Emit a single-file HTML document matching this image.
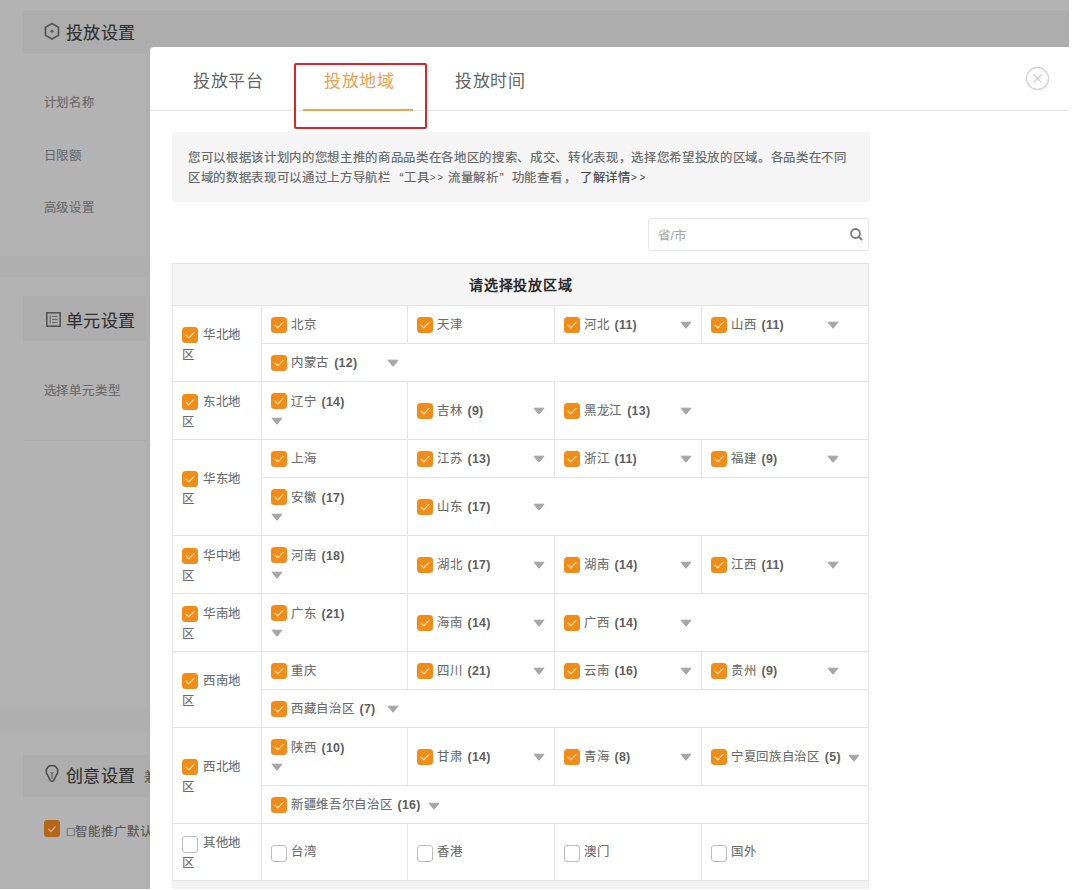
<!DOCTYPE html><html lang="zh-CN"><head><meta charset="utf-8"><style>
*{margin:0;padding:0;box-sizing:border-box}
html,body{width:1080px;height:890px;overflow:hidden;background:#fff;font-family:"Liberation Sans",sans-serif}
.a{position:absolute}
.t{position:absolute;white-space:nowrap;line-height:20px;-webkit-text-stroke:0.15px currentColor}
.bg{left:0;top:0;width:1069px;height:889px;background:#b3b3b3}
.card{background:#adadad}
.hd{font-size:17px;letter-spacing:0.35px;color:#303030}
.lbl{font-size:12.4px;letter-spacing:0.85px;color:#6a6a6a}
.modal{left:150px;top:47px;width:919px;height:842px;background:#fff;border-top-left-radius:4px}
.tab{font-size:17px;letter-spacing:0.6px;color:#666;line-height:24px;-webkit-text-stroke:0}
.info{left:172px;top:132px;width:698px;height:70px;background:#f5f5f5;border-radius:3px}
.itxt{font-size:12.4px;letter-spacing:0.67px;color:#666;line-height:20px}
.hl{position:absolute;height:1px;background:#e4e4e4}
.vl{position:absolute;width:1px;background:#e4e4e4}
.cb{position:absolute;width:16px;height:16px;border-radius:3.5px;background:#f28c18}
.cb svg{position:absolute;left:0;top:0}
.ucb{position:absolute;width:16px;height:17px;border-radius:3px;border:1.6px solid #bdbdbd;background:#fff}
.nm{position:absolute;white-space:nowrap;-webkit-text-stroke:0.1px currentColor;font-size:12.4px;letter-spacing:0.67px;line-height:20px;color:#6a6a6a}
.nm b{font-family:"Liberation Sans",sans-serif;font-weight:bold;color:#606060;letter-spacing:0.3px;margin-left:1px;-webkit-text-stroke:0}
.ia{display:inline-block;vertical-align:middle;width:12px;height:8px;margin-left:7px;margin-top:1px}
.ar{position:absolute;width:12px;height:8px;line-height:0}
.ar svg,.ia svg{display:block}
</style></head><body><div class="a bg"></div>
<div class="a card" style="left:23px;top:10px;width:1046px;height:44px"></div>
<div class="a" style="left:0;top:256px;width:150px;height:21px;background:#b0b0b0"></div>
<div class="a" style="left:0;top:708px;width:150px;height:24px;background:#b0b0b0"></div>
<div class="a card" style="left:23px;top:296px;width:127px;height:45px"></div>
<div class="a" style="left:24px;top:440px;width:126px;height:1px;background:#a9a9a9"></div>
<div class="a" style="left:146px;top:54px;width:4px;height:835px;background:#afafaf"></div>
<div class="a card" style="left:23px;top:755px;width:127px;height:42px"></div>
<svg class="a" style="left:44px;top:22px" width="16" height="19" viewBox="0 0 16 19"><path d="M8 1.5 L14.5 5.2 L14.5 13.3 L8 17 L1.5 13.3 L1.5 5.2 Z" fill="none" stroke="#585858" stroke-width="1.8" stroke-linejoin="round"/><circle cx="8" cy="9.3" r="1.5" fill="#585858"/></svg>
<div class="t hd" style="left:66px;top:24px">投放设置</div>
<div class="lbl t" style="left:43.5px;top:93px;">计划名称</div>
<div class="lbl t" style="left:43.5px;top:145.5px;">日限额</div>
<div class="lbl t" style="left:43.5px;top:198.3px;">高级设置</div>
<svg class="a" style="left:46px;top:312px" width="15" height="15" viewBox="0 0 15 15"><rect x="0.8" y="0.8" width="13.4" height="13.4" fill="none" stroke="#505050" stroke-width="1.5"/><path d="M4.2 3.5V11.5M6 4.5H11.5M6 7.5H11.5M6 10.5H11.5" stroke="#6a6a6a" stroke-width="1"/></svg>
<div class="t hd" style="left:66px;top:311.5px">单元设置</div>
<div class="lbl t" style="left:43.5px;top:380.5px;">选择单元类型</div>
<svg class="a" style="left:45px;top:765px" width="15" height="19" viewBox="0 0 15 19"><path d="M2.6 10 A5.8 5.8 0 1 1 11.4 10 L9 14.8 Q7 18.2 5 14.8 Z" fill="none" stroke="#4a4a4a" stroke-width="1.6" stroke-linejoin="round"/><path d="M7 8V14M5.6 7 L7 8.6 L8.4 7" fill="none" stroke="#555" stroke-width="1"/></svg>
<div class="t hd" style="left:66px;top:767px">创意设置</div>
<div class="t hd" style="left:144px;top:767px;font-size:13px;color:#555">兼</div>
<div class="a" style="left:44px;top:820px;width:16px;height:17px;border-radius:3px;background:#b5651c"><svg width="16" height="17" viewBox="0 0 16 16"><path d="M4.2 8.6 L6.9 11 L11.6 6" fill="none" stroke="#e0b070" stroke-width="1.3"/></svg></div>
<div class="lbl t" style="left:67px;top:821.5px;color:#555">□智能推广默认</div>
<div class="a modal"></div>
<div class="a" style="left:150px;top:110px;width:919px;height:1px;background:#e8e8e8"></div>
<div class="t tab" style="left:193px;top:70px">投放平台</div>
<div class="t tab" style="left:324px;top:70px;color:#f0a04e">投放地域</div>
<div class="t tab" style="left:455px;top:70px">投放时间</div>
<div class="a" style="left:302.5px;top:108.5px;width:110.5px;height:2.5px;background:#e9a458"></div>
<div class="a" style="left:294px;top:62.5px;width:133px;height:66.5px;border:2.5px solid #d8262c;border-radius:2px"></div>
<svg class="a" style="left:1024px;top:65px" width="27" height="27" viewBox="0 0 27 27"><circle cx="13.5" cy="13.5" r="11" fill="none" stroke="#d4d4d4" stroke-width="1.3"/><path d="M9.5 9.5 L17.5 17.5 M17.5 9.5 L9.5 17.5" stroke="#d0d0d0" stroke-width="1.3"/></svg>
<div class="a info"></div>
<div class="t itxt" style="left:188px;top:147.7px">您可以根据该计划内的您想主推的商品品类在各地区的搜索、成交、转化表现，选择您希望投放的区域。各品类在不同</div>
<div class="t itxt" style="left:188px;top:167.7px;">区域的数据表现可以通过上方导航栏</div>
<div class="t itxt" style="left:399.5px;top:167.7px;">“</div>
<div class="t itxt" style="left:404.3px;top:167.7px;">工具</div>
<div class="t itxt" style="left:448px;top:167.7px;">流量解析</div>
<div class="t itxt" style="left:499.5px;top:167.7px;">”</div>
<div class="t itxt" style="left:511.5px;top:167.7px;">功能查看</div>
<div class="t itxt" style="left:563.5px;top:167.7px;">，</div>
<div class="t itxt" style="left:580px;top:167.7px;color:#444">了解详情</div>
<div class="t itxt" style="left:429.8px;top:167.7px;font-size:10px;letter-spacing:0;-webkit-text-stroke:0;">&gt;</div>
<div class="t itxt" style="left:437.3px;top:167.7px;font-size:10px;letter-spacing:0;-webkit-text-stroke:0;">&gt;</div>
<div class="t itxt" style="left:631px;top:167.7px;font-size:10px;letter-spacing:0;-webkit-text-stroke:0;color:#444">&gt;</div>
<div class="t itxt" style="left:639.5px;top:167.7px;font-size:10px;letter-spacing:0;-webkit-text-stroke:0;color:#444">&gt;</div>
<div class="a" style="left:648px;top:218px;width:221px;height:33px;border:1px solid #e6e6e6;border-radius:3px;background:#fff"></div>
<div class="t" style="left:658px;top:226px;font-size:12.4px;letter-spacing:0.5px;color:#aaa">省/市</div>
<svg class="a" style="left:849px;top:228px" width="14" height="14" viewBox="0 0 14 14"><circle cx="6.5" cy="5.5" r="4.5" fill="none" stroke="#7a7a7a" stroke-width="1.8"/><path d="M9.8 8.8 L12.6 11.6" stroke="#7a7a7a" stroke-width="1.9" stroke-linecap="round"/></svg>
<div class="a" style="left:172px;top:263px;width:697px;height:42px;background:#f5f5f5"></div>
<div class="a" style="left:172px;top:880px;width:697px;height:9px;background:#f2f2f2"></div>
<div class="t" style="left:172px;top:275px;width:697px;text-align:center;font-size:14px;letter-spacing:0.9px;text-indent:0.9px;font-weight:bold;color:#2a2a2a;-webkit-text-stroke:0">请选择投放区域</div>
<div class="vl" style="left:172px;top:263px;height:618px"></div>
<div class="vl" style="left:868px;top:263px;height:618px"></div>
<div class="hl" style="left:172px;top:263px;width:697px"></div>
<div class="hl" style="left:172px;top:880px;width:697px"></div>
<div class="hl" style="left:172px;top:305px;width:697px"></div>
<div class="hl" style="left:172px;top:381px;width:697px"></div>
<div class="hl" style="left:172px;top:439px;width:697px"></div>
<div class="hl" style="left:172px;top:535px;width:697px"></div>
<div class="hl" style="left:172px;top:593px;width:697px"></div>
<div class="hl" style="left:172px;top:651px;width:697px"></div>
<div class="hl" style="left:172px;top:727px;width:697px"></div>
<div class="hl" style="left:172px;top:823px;width:697px"></div>
<div class="hl" style="left:261px;top:343px;width:608px"></div>
<div class="hl" style="left:261px;top:477px;width:608px"></div>
<div class="hl" style="left:261px;top:689px;width:608px"></div>
<div class="hl" style="left:261px;top:785px;width:608px"></div>
<div class="vl" style="left:261px;top:305px;height:576px"></div>
<div class="cb" style="left:182px;top:327.0px"><svg width="16" height="16" viewBox="0 0 16 16"><path d="M4.2 8.3 L6.9 10.9 L11.8 5.6" fill="none" stroke="#ffe2ad" stroke-width="1.3" stroke-linecap="round" stroke-linejoin="round"/></svg></div>
<div class="nm" style="left:203px;top:324.5px;">华北地</div>
<div class="nm" style="left:182px;top:344.5px;">区</div>
<div class="cb" style="left:182px;top:394.0px"><svg width="16" height="16" viewBox="0 0 16 16"><path d="M4.2 8.3 L6.9 10.9 L11.8 5.6" fill="none" stroke="#ffe2ad" stroke-width="1.3" stroke-linecap="round" stroke-linejoin="round"/></svg></div>
<div class="nm" style="left:203px;top:391.5px;">东北地</div>
<div class="nm" style="left:182px;top:411.5px;">区</div>
<div class="cb" style="left:182px;top:471.0px"><svg width="16" height="16" viewBox="0 0 16 16"><path d="M4.2 8.3 L6.9 10.9 L11.8 5.6" fill="none" stroke="#ffe2ad" stroke-width="1.3" stroke-linecap="round" stroke-linejoin="round"/></svg></div>
<div class="nm" style="left:203px;top:468.5px;">华东地</div>
<div class="nm" style="left:182px;top:488.5px;">区</div>
<div class="cb" style="left:182px;top:548.0px"><svg width="16" height="16" viewBox="0 0 16 16"><path d="M4.2 8.3 L6.9 10.9 L11.8 5.6" fill="none" stroke="#ffe2ad" stroke-width="1.3" stroke-linecap="round" stroke-linejoin="round"/></svg></div>
<div class="nm" style="left:203px;top:545.5px;">华中地</div>
<div class="nm" style="left:182px;top:565.5px;">区</div>
<div class="cb" style="left:182px;top:606.0px"><svg width="16" height="16" viewBox="0 0 16 16"><path d="M4.2 8.3 L6.9 10.9 L11.8 5.6" fill="none" stroke="#ffe2ad" stroke-width="1.3" stroke-linecap="round" stroke-linejoin="round"/></svg></div>
<div class="nm" style="left:203px;top:603.5px;">华南地</div>
<div class="nm" style="left:182px;top:623.5px;">区</div>
<div class="cb" style="left:182px;top:673.0px"><svg width="16" height="16" viewBox="0 0 16 16"><path d="M4.2 8.3 L6.9 10.9 L11.8 5.6" fill="none" stroke="#ffe2ad" stroke-width="1.3" stroke-linecap="round" stroke-linejoin="round"/></svg></div>
<div class="nm" style="left:203px;top:670.5px;">西南地</div>
<div class="nm" style="left:182px;top:690.5px;">区</div>
<div class="cb" style="left:182px;top:759.0px"><svg width="16" height="16" viewBox="0 0 16 16"><path d="M4.2 8.3 L6.9 10.9 L11.8 5.6" fill="none" stroke="#ffe2ad" stroke-width="1.3" stroke-linecap="round" stroke-linejoin="round"/></svg></div>
<div class="nm" style="left:203px;top:756.5px;">西北地</div>
<div class="nm" style="left:182px;top:776.5px;">区</div>
<div class="ucb" style="left:182px;top:835.5px"></div>
<div class="nm" style="left:203px;top:833.0px;">其他地</div>
<div class="nm" style="left:182px;top:853.0px;">区</div>
<div class="cb" style="left:271px;top:317.0px"><svg width="16" height="16" viewBox="0 0 16 16"><path d="M4.2 8.3 L6.9 10.9 L11.8 5.6" fill="none" stroke="#ffe2ad" stroke-width="1.3" stroke-linecap="round" stroke-linejoin="round"/></svg></div>
<div class="nm" style="left:291px;top:314.5px;">北京</div>
<div class="vl" style="left:407px;top:305px;height:39px"></div>
<div class="cb" style="left:417px;top:317.0px"><svg width="16" height="16" viewBox="0 0 16 16"><path d="M4.2 8.3 L6.9 10.9 L11.8 5.6" fill="none" stroke="#ffe2ad" stroke-width="1.3" stroke-linecap="round" stroke-linejoin="round"/></svg></div>
<div class="nm" style="left:437px;top:314.5px;">天津</div>
<div class="vl" style="left:554px;top:305px;height:39px"></div>
<div class="cb" style="left:564px;top:317.0px"><svg width="16" height="16" viewBox="0 0 16 16"><path d="M4.2 8.3 L6.9 10.9 L11.8 5.6" fill="none" stroke="#ffe2ad" stroke-width="1.3" stroke-linecap="round" stroke-linejoin="round"/></svg></div>
<div class="nm" style="left:584px;top:314.5px;">河北 <b>(11)</b></div>
<div class="ar" style="left:679.7px;top:320.5px"><svg width="12" height="8" viewBox="0 0 12 8"><path d="M1 1.2 L11 1.2 L6 7.2 Z" fill="#a6a6a6" stroke="#a6a6a6" stroke-width="1" stroke-linejoin="round"/></svg></div>
<div class="vl" style="left:701px;top:305px;height:39px"></div>
<div class="cb" style="left:711px;top:317.0px"><svg width="16" height="16" viewBox="0 0 16 16"><path d="M4.2 8.3 L6.9 10.9 L11.8 5.6" fill="none" stroke="#ffe2ad" stroke-width="1.3" stroke-linecap="round" stroke-linejoin="round"/></svg></div>
<div class="nm" style="left:731px;top:314.5px;">山西 <b>(11)</b></div>
<div class="ar" style="left:826.7px;top:320.5px"><svg width="12" height="8" viewBox="0 0 12 8"><path d="M1 1.2 L11 1.2 L6 7.2 Z" fill="#a6a6a6" stroke="#a6a6a6" stroke-width="1" stroke-linejoin="round"/></svg></div>
<div class="cb" style="left:271px;top:355.0px"><svg width="16" height="16" viewBox="0 0 16 16"><path d="M4.2 8.3 L6.9 10.9 L11.8 5.6" fill="none" stroke="#ffe2ad" stroke-width="1.3" stroke-linecap="round" stroke-linejoin="round"/></svg></div>
<div class="nm" style="left:291px;top:352.5px;">内蒙古 <b>(12)</b></div>
<div class="ar" style="left:386.7px;top:358.5px"><svg width="12" height="8" viewBox="0 0 12 8"><path d="M1 1.2 L11 1.2 L6 7.2 Z" fill="#a6a6a6" stroke="#a6a6a6" stroke-width="1" stroke-linejoin="round"/></svg></div>
<div class="cb" style="left:271px;top:393px"><svg width="16" height="16" viewBox="0 0 16 16"><path d="M4.2 8.3 L6.9 10.9 L11.8 5.6" fill="none" stroke="#ffe2ad" stroke-width="1.3" stroke-linecap="round" stroke-linejoin="round"/></svg></div>
<div class="nm" style="left:291px;top:392px;">辽宁 <b>(14)</b></div>
<div class="ar" style="left:270.7px;top:417px"><svg width="12" height="8" viewBox="0 0 12 8"><path d="M1 1.2 L11 1.2 L6 7.2 Z" fill="#a6a6a6" stroke="#a6a6a6" stroke-width="1" stroke-linejoin="round"/></svg></div>
<div class="vl" style="left:407px;top:381px;height:59px"></div>
<div class="cb" style="left:417px;top:403.0px"><svg width="16" height="16" viewBox="0 0 16 16"><path d="M4.2 8.3 L6.9 10.9 L11.8 5.6" fill="none" stroke="#ffe2ad" stroke-width="1.3" stroke-linecap="round" stroke-linejoin="round"/></svg></div>
<div class="nm" style="left:437px;top:400.5px;">吉林 <b>(9)</b></div>
<div class="ar" style="left:532.7px;top:406.5px"><svg width="12" height="8" viewBox="0 0 12 8"><path d="M1 1.2 L11 1.2 L6 7.2 Z" fill="#a6a6a6" stroke="#a6a6a6" stroke-width="1" stroke-linejoin="round"/></svg></div>
<div class="vl" style="left:554px;top:381px;height:59px"></div>
<div class="cb" style="left:564px;top:403.0px"><svg width="16" height="16" viewBox="0 0 16 16"><path d="M4.2 8.3 L6.9 10.9 L11.8 5.6" fill="none" stroke="#ffe2ad" stroke-width="1.3" stroke-linecap="round" stroke-linejoin="round"/></svg></div>
<div class="nm" style="left:584px;top:400.5px;">黑龙江 <b>(13)</b></div>
<div class="ar" style="left:679.7px;top:406.5px"><svg width="12" height="8" viewBox="0 0 12 8"><path d="M1 1.2 L11 1.2 L6 7.2 Z" fill="#a6a6a6" stroke="#a6a6a6" stroke-width="1" stroke-linejoin="round"/></svg></div>
<div class="cb" style="left:271px;top:451.0px"><svg width="16" height="16" viewBox="0 0 16 16"><path d="M4.2 8.3 L6.9 10.9 L11.8 5.6" fill="none" stroke="#ffe2ad" stroke-width="1.3" stroke-linecap="round" stroke-linejoin="round"/></svg></div>
<div class="nm" style="left:291px;top:448.5px;">上海</div>
<div class="vl" style="left:407px;top:439px;height:39px"></div>
<div class="cb" style="left:417px;top:451.0px"><svg width="16" height="16" viewBox="0 0 16 16"><path d="M4.2 8.3 L6.9 10.9 L11.8 5.6" fill="none" stroke="#ffe2ad" stroke-width="1.3" stroke-linecap="round" stroke-linejoin="round"/></svg></div>
<div class="nm" style="left:437px;top:448.5px;">江苏 <b>(13)</b></div>
<div class="ar" style="left:532.7px;top:454.5px"><svg width="12" height="8" viewBox="0 0 12 8"><path d="M1 1.2 L11 1.2 L6 7.2 Z" fill="#a6a6a6" stroke="#a6a6a6" stroke-width="1" stroke-linejoin="round"/></svg></div>
<div class="vl" style="left:554px;top:439px;height:39px"></div>
<div class="cb" style="left:564px;top:451.0px"><svg width="16" height="16" viewBox="0 0 16 16"><path d="M4.2 8.3 L6.9 10.9 L11.8 5.6" fill="none" stroke="#ffe2ad" stroke-width="1.3" stroke-linecap="round" stroke-linejoin="round"/></svg></div>
<div class="nm" style="left:584px;top:448.5px;">浙江 <b>(11)</b></div>
<div class="ar" style="left:679.7px;top:454.5px"><svg width="12" height="8" viewBox="0 0 12 8"><path d="M1 1.2 L11 1.2 L6 7.2 Z" fill="#a6a6a6" stroke="#a6a6a6" stroke-width="1" stroke-linejoin="round"/></svg></div>
<div class="vl" style="left:701px;top:439px;height:39px"></div>
<div class="cb" style="left:711px;top:451.0px"><svg width="16" height="16" viewBox="0 0 16 16"><path d="M4.2 8.3 L6.9 10.9 L11.8 5.6" fill="none" stroke="#ffe2ad" stroke-width="1.3" stroke-linecap="round" stroke-linejoin="round"/></svg></div>
<div class="nm" style="left:731px;top:448.5px;">福建 <b>(9)</b></div>
<div class="ar" style="left:826.7px;top:454.5px"><svg width="12" height="8" viewBox="0 0 12 8"><path d="M1 1.2 L11 1.2 L6 7.2 Z" fill="#a6a6a6" stroke="#a6a6a6" stroke-width="1" stroke-linejoin="round"/></svg></div>
<div class="cb" style="left:271px;top:489px"><svg width="16" height="16" viewBox="0 0 16 16"><path d="M4.2 8.3 L6.9 10.9 L11.8 5.6" fill="none" stroke="#ffe2ad" stroke-width="1.3" stroke-linecap="round" stroke-linejoin="round"/></svg></div>
<div class="nm" style="left:291px;top:488px;">安徽 <b>(17)</b></div>
<div class="ar" style="left:270.7px;top:513px"><svg width="12" height="8" viewBox="0 0 12 8"><path d="M1 1.2 L11 1.2 L6 7.2 Z" fill="#a6a6a6" stroke="#a6a6a6" stroke-width="1" stroke-linejoin="round"/></svg></div>
<div class="vl" style="left:407px;top:477px;height:59px"></div>
<div class="cb" style="left:417px;top:499.0px"><svg width="16" height="16" viewBox="0 0 16 16"><path d="M4.2 8.3 L6.9 10.9 L11.8 5.6" fill="none" stroke="#ffe2ad" stroke-width="1.3" stroke-linecap="round" stroke-linejoin="round"/></svg></div>
<div class="nm" style="left:437px;top:496.5px;">山东 <b>(17)</b></div>
<div class="ar" style="left:532.7px;top:502.5px"><svg width="12" height="8" viewBox="0 0 12 8"><path d="M1 1.2 L11 1.2 L6 7.2 Z" fill="#a6a6a6" stroke="#a6a6a6" stroke-width="1" stroke-linejoin="round"/></svg></div>
<div class="cb" style="left:271px;top:547px"><svg width="16" height="16" viewBox="0 0 16 16"><path d="M4.2 8.3 L6.9 10.9 L11.8 5.6" fill="none" stroke="#ffe2ad" stroke-width="1.3" stroke-linecap="round" stroke-linejoin="round"/></svg></div>
<div class="nm" style="left:291px;top:546px;">河南 <b>(18)</b></div>
<div class="ar" style="left:270.7px;top:571px"><svg width="12" height="8" viewBox="0 0 12 8"><path d="M1 1.2 L11 1.2 L6 7.2 Z" fill="#a6a6a6" stroke="#a6a6a6" stroke-width="1" stroke-linejoin="round"/></svg></div>
<div class="vl" style="left:407px;top:535px;height:59px"></div>
<div class="cb" style="left:417px;top:557.0px"><svg width="16" height="16" viewBox="0 0 16 16"><path d="M4.2 8.3 L6.9 10.9 L11.8 5.6" fill="none" stroke="#ffe2ad" stroke-width="1.3" stroke-linecap="round" stroke-linejoin="round"/></svg></div>
<div class="nm" style="left:437px;top:554.5px;">湖北 <b>(17)</b></div>
<div class="ar" style="left:532.7px;top:560.5px"><svg width="12" height="8" viewBox="0 0 12 8"><path d="M1 1.2 L11 1.2 L6 7.2 Z" fill="#a6a6a6" stroke="#a6a6a6" stroke-width="1" stroke-linejoin="round"/></svg></div>
<div class="vl" style="left:554px;top:535px;height:59px"></div>
<div class="cb" style="left:564px;top:557.0px"><svg width="16" height="16" viewBox="0 0 16 16"><path d="M4.2 8.3 L6.9 10.9 L11.8 5.6" fill="none" stroke="#ffe2ad" stroke-width="1.3" stroke-linecap="round" stroke-linejoin="round"/></svg></div>
<div class="nm" style="left:584px;top:554.5px;">湖南 <b>(14)</b></div>
<div class="ar" style="left:679.7px;top:560.5px"><svg width="12" height="8" viewBox="0 0 12 8"><path d="M1 1.2 L11 1.2 L6 7.2 Z" fill="#a6a6a6" stroke="#a6a6a6" stroke-width="1" stroke-linejoin="round"/></svg></div>
<div class="vl" style="left:701px;top:535px;height:59px"></div>
<div class="cb" style="left:711px;top:557.0px"><svg width="16" height="16" viewBox="0 0 16 16"><path d="M4.2 8.3 L6.9 10.9 L11.8 5.6" fill="none" stroke="#ffe2ad" stroke-width="1.3" stroke-linecap="round" stroke-linejoin="round"/></svg></div>
<div class="nm" style="left:731px;top:554.5px;">江西 <b>(11)</b></div>
<div class="ar" style="left:826.7px;top:560.5px"><svg width="12" height="8" viewBox="0 0 12 8"><path d="M1 1.2 L11 1.2 L6 7.2 Z" fill="#a6a6a6" stroke="#a6a6a6" stroke-width="1" stroke-linejoin="round"/></svg></div>
<div class="cb" style="left:271px;top:605px"><svg width="16" height="16" viewBox="0 0 16 16"><path d="M4.2 8.3 L6.9 10.9 L11.8 5.6" fill="none" stroke="#ffe2ad" stroke-width="1.3" stroke-linecap="round" stroke-linejoin="round"/></svg></div>
<div class="nm" style="left:291px;top:604px;">广东 <b>(21)</b></div>
<div class="ar" style="left:270.7px;top:629px"><svg width="12" height="8" viewBox="0 0 12 8"><path d="M1 1.2 L11 1.2 L6 7.2 Z" fill="#a6a6a6" stroke="#a6a6a6" stroke-width="1" stroke-linejoin="round"/></svg></div>
<div class="vl" style="left:407px;top:593px;height:59px"></div>
<div class="cb" style="left:417px;top:615.0px"><svg width="16" height="16" viewBox="0 0 16 16"><path d="M4.2 8.3 L6.9 10.9 L11.8 5.6" fill="none" stroke="#ffe2ad" stroke-width="1.3" stroke-linecap="round" stroke-linejoin="round"/></svg></div>
<div class="nm" style="left:437px;top:612.5px;">海南 <b>(14)</b></div>
<div class="ar" style="left:532.7px;top:618.5px"><svg width="12" height="8" viewBox="0 0 12 8"><path d="M1 1.2 L11 1.2 L6 7.2 Z" fill="#a6a6a6" stroke="#a6a6a6" stroke-width="1" stroke-linejoin="round"/></svg></div>
<div class="vl" style="left:554px;top:593px;height:59px"></div>
<div class="cb" style="left:564px;top:615.0px"><svg width="16" height="16" viewBox="0 0 16 16"><path d="M4.2 8.3 L6.9 10.9 L11.8 5.6" fill="none" stroke="#ffe2ad" stroke-width="1.3" stroke-linecap="round" stroke-linejoin="round"/></svg></div>
<div class="nm" style="left:584px;top:612.5px;">广西 <b>(14)</b></div>
<div class="ar" style="left:679.7px;top:618.5px"><svg width="12" height="8" viewBox="0 0 12 8"><path d="M1 1.2 L11 1.2 L6 7.2 Z" fill="#a6a6a6" stroke="#a6a6a6" stroke-width="1" stroke-linejoin="round"/></svg></div>
<div class="cb" style="left:271px;top:663.0px"><svg width="16" height="16" viewBox="0 0 16 16"><path d="M4.2 8.3 L6.9 10.9 L11.8 5.6" fill="none" stroke="#ffe2ad" stroke-width="1.3" stroke-linecap="round" stroke-linejoin="round"/></svg></div>
<div class="nm" style="left:291px;top:660.5px;">重庆</div>
<div class="vl" style="left:407px;top:651px;height:39px"></div>
<div class="cb" style="left:417px;top:663.0px"><svg width="16" height="16" viewBox="0 0 16 16"><path d="M4.2 8.3 L6.9 10.9 L11.8 5.6" fill="none" stroke="#ffe2ad" stroke-width="1.3" stroke-linecap="round" stroke-linejoin="round"/></svg></div>
<div class="nm" style="left:437px;top:660.5px;">四川 <b>(21)</b></div>
<div class="ar" style="left:532.7px;top:666.5px"><svg width="12" height="8" viewBox="0 0 12 8"><path d="M1 1.2 L11 1.2 L6 7.2 Z" fill="#a6a6a6" stroke="#a6a6a6" stroke-width="1" stroke-linejoin="round"/></svg></div>
<div class="vl" style="left:554px;top:651px;height:39px"></div>
<div class="cb" style="left:564px;top:663.0px"><svg width="16" height="16" viewBox="0 0 16 16"><path d="M4.2 8.3 L6.9 10.9 L11.8 5.6" fill="none" stroke="#ffe2ad" stroke-width="1.3" stroke-linecap="round" stroke-linejoin="round"/></svg></div>
<div class="nm" style="left:584px;top:660.5px;">云南 <b>(16)</b></div>
<div class="ar" style="left:679.7px;top:666.5px"><svg width="12" height="8" viewBox="0 0 12 8"><path d="M1 1.2 L11 1.2 L6 7.2 Z" fill="#a6a6a6" stroke="#a6a6a6" stroke-width="1" stroke-linejoin="round"/></svg></div>
<div class="vl" style="left:701px;top:651px;height:39px"></div>
<div class="cb" style="left:711px;top:663.0px"><svg width="16" height="16" viewBox="0 0 16 16"><path d="M4.2 8.3 L6.9 10.9 L11.8 5.6" fill="none" stroke="#ffe2ad" stroke-width="1.3" stroke-linecap="round" stroke-linejoin="round"/></svg></div>
<div class="nm" style="left:731px;top:660.5px;">贵州 <b>(9)</b></div>
<div class="ar" style="left:826.7px;top:666.5px"><svg width="12" height="8" viewBox="0 0 12 8"><path d="M1 1.2 L11 1.2 L6 7.2 Z" fill="#a6a6a6" stroke="#a6a6a6" stroke-width="1" stroke-linejoin="round"/></svg></div>
<div class="cb" style="left:271px;top:701.0px"><svg width="16" height="16" viewBox="0 0 16 16"><path d="M4.2 8.3 L6.9 10.9 L11.8 5.6" fill="none" stroke="#ffe2ad" stroke-width="1.3" stroke-linecap="round" stroke-linejoin="round"/></svg></div>
<div class="nm" style="left:291px;top:698.5px;">西藏自治区 <b>(7)</b></div>
<div class="ar" style="left:386.7px;top:704.5px"><svg width="12" height="8" viewBox="0 0 12 8"><path d="M1 1.2 L11 1.2 L6 7.2 Z" fill="#a6a6a6" stroke="#a6a6a6" stroke-width="1" stroke-linejoin="round"/></svg></div>
<div class="cb" style="left:271px;top:739px"><svg width="16" height="16" viewBox="0 0 16 16"><path d="M4.2 8.3 L6.9 10.9 L11.8 5.6" fill="none" stroke="#ffe2ad" stroke-width="1.3" stroke-linecap="round" stroke-linejoin="round"/></svg></div>
<div class="nm" style="left:291px;top:738px;">陕西 <b>(10)</b></div>
<div class="ar" style="left:270.7px;top:763px"><svg width="12" height="8" viewBox="0 0 12 8"><path d="M1 1.2 L11 1.2 L6 7.2 Z" fill="#a6a6a6" stroke="#a6a6a6" stroke-width="1" stroke-linejoin="round"/></svg></div>
<div class="vl" style="left:407px;top:727px;height:59px"></div>
<div class="cb" style="left:417px;top:749.0px"><svg width="16" height="16" viewBox="0 0 16 16"><path d="M4.2 8.3 L6.9 10.9 L11.8 5.6" fill="none" stroke="#ffe2ad" stroke-width="1.3" stroke-linecap="round" stroke-linejoin="round"/></svg></div>
<div class="nm" style="left:437px;top:746.5px;">甘肃 <b>(14)</b></div>
<div class="ar" style="left:532.7px;top:752.5px"><svg width="12" height="8" viewBox="0 0 12 8"><path d="M1 1.2 L11 1.2 L6 7.2 Z" fill="#a6a6a6" stroke="#a6a6a6" stroke-width="1" stroke-linejoin="round"/></svg></div>
<div class="vl" style="left:554px;top:727px;height:59px"></div>
<div class="cb" style="left:564px;top:749.0px"><svg width="16" height="16" viewBox="0 0 16 16"><path d="M4.2 8.3 L6.9 10.9 L11.8 5.6" fill="none" stroke="#ffe2ad" stroke-width="1.3" stroke-linecap="round" stroke-linejoin="round"/></svg></div>
<div class="nm" style="left:584px;top:746.5px;">青海 <b>(8)</b></div>
<div class="ar" style="left:679.7px;top:752.5px"><svg width="12" height="8" viewBox="0 0 12 8"><path d="M1 1.2 L11 1.2 L6 7.2 Z" fill="#a6a6a6" stroke="#a6a6a6" stroke-width="1" stroke-linejoin="round"/></svg></div>
<div class="vl" style="left:701px;top:727px;height:59px"></div>
<div class="cb" style="left:711px;top:749.0px"><svg width="16" height="16" viewBox="0 0 16 16"><path d="M4.2 8.3 L6.9 10.9 L11.8 5.6" fill="none" stroke="#ffe2ad" stroke-width="1.3" stroke-linecap="round" stroke-linejoin="round"/></svg></div>
<div class="nm" style="left:731px;top:746.5px;">宁夏回族自治区 <b>(5)</b><span class="ia"><svg width="12" height="8" viewBox="0 0 12 8"><path d="M1 1.2 L11 1.2 L6 7.2 Z" fill="#a6a6a6" stroke="#a6a6a6" stroke-width="1" stroke-linejoin="round"/></svg></span></div>
<div class="cb" style="left:271px;top:797.0px"><svg width="16" height="16" viewBox="0 0 16 16"><path d="M4.2 8.3 L6.9 10.9 L11.8 5.6" fill="none" stroke="#ffe2ad" stroke-width="1.3" stroke-linecap="round" stroke-linejoin="round"/></svg></div>
<div class="nm" style="left:291px;top:794.5px;">新疆维吾尔自治区 <b>(16)</b><span class="ia"><svg width="12" height="8" viewBox="0 0 12 8"><path d="M1 1.2 L11 1.2 L6 7.2 Z" fill="#a6a6a6" stroke="#a6a6a6" stroke-width="1" stroke-linejoin="round"/></svg></span></div>
<div class="ucb" style="left:271px;top:845.0px"></div>
<div class="nm" style="left:291px;top:842.0px;">台湾</div>
<div class="vl" style="left:407px;top:823px;height:58px"></div>
<div class="ucb" style="left:417px;top:845.0px"></div>
<div class="nm" style="left:437px;top:842.0px;">香港</div>
<div class="vl" style="left:554px;top:823px;height:58px"></div>
<div class="ucb" style="left:564px;top:845.0px"></div>
<div class="nm" style="left:584px;top:842.0px;">澳门</div>
<div class="vl" style="left:701px;top:823px;height:58px"></div>
<div class="ucb" style="left:711px;top:845.0px"></div>
<div class="nm" style="left:731px;top:842.0px;">国外</div></body></html>
